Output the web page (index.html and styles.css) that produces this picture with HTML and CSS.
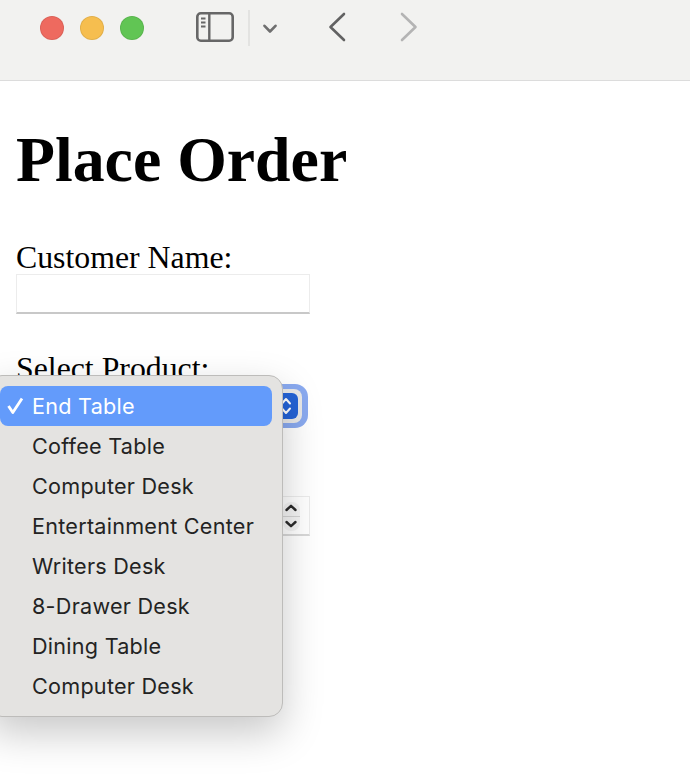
FILE: index.html
```html
<!DOCTYPE html>
<html lang="en">
<head>
    <meta charset="UTF-8">
    <meta name="viewport" content="width=device-width, initial-scale=1.0">
    <title>Place Order</title>
    <link rel="stylesheet" href="styles.css">
</head>
<body>
    <header class="titlebar">
        <div class="lights">
            <span class="light red"></span>
            <span class="light yellow"></span>
            <span class="light green"></span>
        </div>
        <svg class="sidebar-icon" width="38" height="30" viewBox="0 0 38 30" fill="none" stroke="#676767">
            <rect x="1.300" y="1.300" width="35.400" height="27.400" rx="3.500" stroke-width="2.600"/>
            <path d="M13.300 1.500V28.500" stroke-width="2.400"/>
            <path d="M5 6.500H9.500M5 10.500H9.500M5 14.500H9.500" stroke-width="1.800"/>
        </svg>
        <span class="divider"></span>
        <svg class="chevron" width="14" height="10" viewBox="0 0 14 10" fill="none" stroke="#6f6f6f" stroke-width="2.600" stroke-linecap="round" stroke-linejoin="round">
            <path d="M1.500 1.800L7 7.500L12.500 1.800"/>
        </svg>
        <svg class="nav-back" width="18" height="30" viewBox="0 0 18 30" fill="none" stroke="#626262" stroke-width="2.600" stroke-linecap="round" stroke-linejoin="round">
            <path d="M16 2L2.500 15L16 28"/>
        </svg>
        <svg class="nav-forward" width="18" height="30" viewBox="0 0 18 30" fill="none" stroke="#b4b4b4" stroke-width="2.600" stroke-linecap="round" stroke-linejoin="round">
            <path d="M2 2L15.500 15L2 28"/>
        </svg>
    </header>

    <main class="page">
        <h1>Place Order</h1>
        <form class="order-form">
            <label class="field-label" for="customer">Customer Name:</label>
            <input class="text-input" id="customer" type="text">

            <div class="field-label product-label">Select Product:</div>
            <div class="select-ring">
                <div class="select-box">
                    <span class="select-arrows">
                        <svg width="12" height="20" viewBox="0 0 12 20" fill="none" stroke="#fff" stroke-width="2" stroke-linecap="round" stroke-linejoin="round">
                            <path d="M2 7.500L6 3L10 7.500M2 12.500L6 17L10 12.500"/>
                        </svg>
                    </span>
                </div>
            </div>

            <div class="number-input">
                <span class="stepper">
                    <svg width="16" height="28" viewBox="0 0 16 28" fill="none" stroke="#2b2b2b" stroke-width="2.400" stroke-linecap="round" stroke-linejoin="round">
                        <path d="M3.500 8L8 3.800L12.500 8M3.500 20L8 24.200L12.500 20"/>
                    </svg>
                </span>
            </div>
        </form>

        <ul class="menu">
            <li class="menu-item selected">
                <svg class="check" width="18" height="18" viewBox="0 0 18 18" fill="none" stroke="#fff" stroke-width="2.800" stroke-linejoin="round">
                    <path d="M2.500 9L6.800 15.500L16 1.500"/>
                </svg>
                End Table
            </li>
            <li class="menu-item">Coffee Table</li>
            <li class="menu-item">Computer Desk</li>
            <li class="menu-item">Entertainment Center</li>
            <li class="menu-item">Writers Desk</li>
            <li class="menu-item">8-Drawer Desk</li>
            <li class="menu-item">Dining Table</li>
            <li class="menu-item">Computer Desk</li>
        </ul>
    </main>
</body>
</html>
```

FILE: styles.css
```css
html, body {
    margin: 0;
    height: 100%;
    overflow: hidden;
    background: white;
}
.titlebar {
    display: flex;
    align-items: flex-start;
    box-sizing: border-box;
    height: 81px;
    padding-left: 40px;
    background: #f2f2f0;
    border-bottom: 1px solid #dcdcdc;
}
.lights {
    display: flex;
    gap: 16px;
    margin-top: 16px;
}
.light {
    box-sizing: border-box;
    width: 24px;
    height: 24px;
    border-radius: 50%;
    border: 1px solid rgba(0,0,0,0.08);
}
.red { background: #ee6a5f; }
.yellow { background: #f6be4f; }
.green { background: #61c554; }
.sidebar-icon {
    margin: 12px 0 0 52px;
}
.divider {
    width: 2px;
    height: 36px;
    margin: 10px 0 0 14px;
    background: #e3e3e1;
}
.chevron {
    margin: 24px 0 0 13px;
}
.nav-back {
    margin: 12px 0 0 51px;
}
.nav-forward {
    margin: 12px 0 0 54px;
}
.page {
    position: relative;
    padding: 42px 16px 0;
    font-family: "Liberation Serif", "Times New Roman", serif;
    color: black;
}
h1 {
    margin: 0;
    font-size: 63.8px;
    line-height: 74px;
    font-weight: bold;
}
.order-form {
    display: flex;
    flex-direction: column;
    align-items: flex-start;
    margin-top: 44px;
}
.field-label {
    font-size: 31.8px;
    line-height: 33px;
}
.text-input {
    box-sizing: border-box;
    width: 294px;
    height: 40px;
    padding: 0;
    background: white;
    border: 1px solid #ececec;
    border-bottom: 2px solid #c8c8c8;
    border-radius: 0;
}
.product-label {
    margin-top: 38px;
}
.select-ring {
    box-sizing: border-box;
    width: 292px;
    height: 44px;
    margin-top: -1px;
    padding: 5px 6px 5px 5px;
    background: #8aaaf0;
    border-radius: 13px;
}
.select-box {
    display: flex;
    justify-content: flex-end;
    box-sizing: border-box;
    height: 34px;
    padding: 4px;
    background: #e9e9e9;
    border-radius: 8px;
}
.select-arrows {
    display: flex;
    align-items: center;
    justify-content: center;
    width: 25px;
    height: 26px;
    background: #2463d6;
    border-radius: 6px;
}
.number-input {
    display: flex;
    justify-content: flex-end;
    align-items: center;
    box-sizing: border-box;
    width: 294px;
    height: 40px;
    margin-top: 68px;
    padding-right: 9px;
    background: white;
    border: 1px solid #ececec;
    border-bottom: 2px solid #d8d8d8;
}
.stepper {
    display: flex;
    box-sizing: border-box;
    width: 17px;
    height: 29px;
    margin-top: 1px;
    background: linear-gradient(#f4f4f4 0 49%, #d4d4d4 49% 53%, #f4f4f4 53%);
    border-radius: 8px;
}
.menu {
    position: absolute;
    top: 294px;
    left: -12px;
    box-sizing: border-box;
    width: 295px;
    height: 342px;
    margin: 0;
    padding: 10px 10px 0 11px;
    list-style: none;
    background: #e4e3e1;
    border: 1px solid #bdbcba;
    border-radius: 14px;
    box-shadow: 0 16px 40px rgba(0,0,0,0.22);
    font-family: Inter, "Noto Sans", sans-serif;
    font-size: 21.6px;
    letter-spacing: 0.25px;
    color: #232323;
}
.menu-item {
    position: relative;
    height: 40px;
    line-height: 40px;
    padding-left: 32px;
    border-radius: 8px;
}
.selected {
    background: #639bfb;
    color: white;
}
.check {
    position: absolute;
    left: 6px;
    top: 11px;
}
```
